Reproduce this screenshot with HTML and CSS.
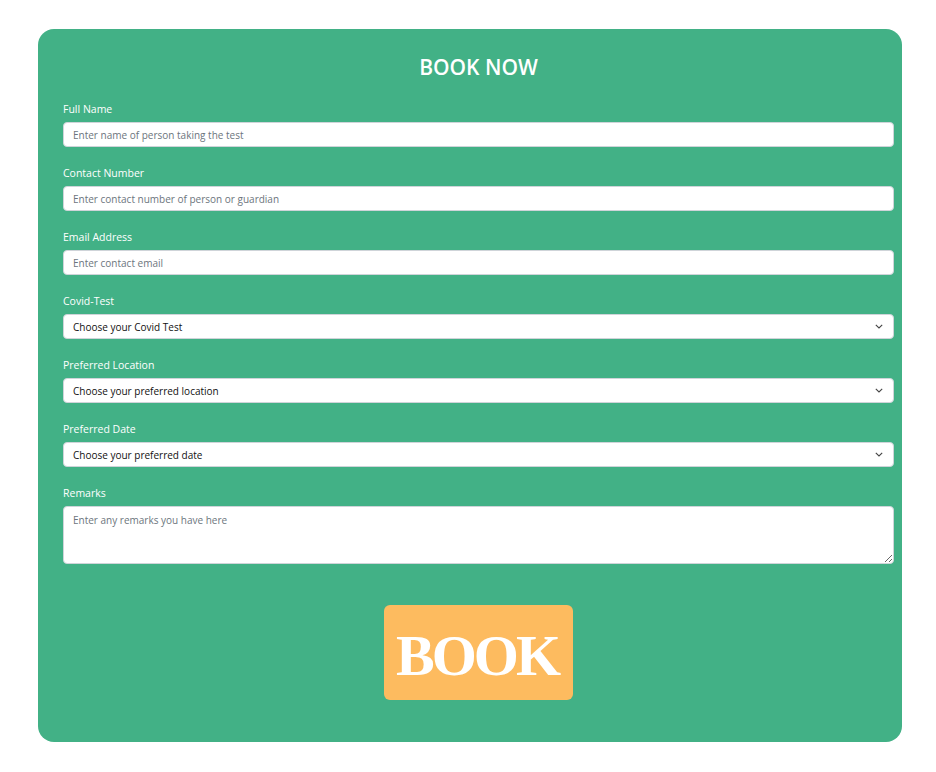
FILE: index.html
```html
<!DOCTYPE html>
<html lang="en">
<head>
<meta charset="utf-8">
<title>Book Now</title>
<link rel="stylesheet" href="styles.css">
</head>
<body>
<form class="card">
  <h1 class="title">BOOK NOW</h1>
  <div class="field">
    <label class="label" for="name">Full Name</label>
    <input class="input" id="name" type="text" placeholder="Enter name of person taking the test">
  </div>
  <div class="field">
    <label class="label" for="contact">Contact Number</label>
    <input class="input" id="contact" type="text" placeholder="Enter contact number of person or guardian">
  </div>
  <div class="field">
    <label class="label" for="email">Email Address</label>
    <input class="input" id="email" type="email" placeholder="Enter contact email">
  </div>
  <div class="field">
    <label class="label" for="test">Covid-Test</label>
    <div class="select-wrap">
      <select class="input select" id="test"><option>Choose your Covid Test</option></select>
      <svg class="chevron" width="8" height="5" viewBox="0 0 8 5"><path d="M0.8 0.8 L4 4 L7.2 0.8" fill="none" stroke="#444" stroke-width="1.1"/></svg>
    </div>
  </div>
  <div class="field">
    <label class="label" for="loc">Preferred Location</label>
    <div class="select-wrap">
      <select class="input select" id="loc"><option>Choose your preferred location</option></select>
      <svg class="chevron" width="8" height="5" viewBox="0 0 8 5"><path d="M0.8 0.8 L4 4 L7.2 0.8" fill="none" stroke="#444" stroke-width="1.1"/></svg>
    </div>
  </div>
  <div class="field">
    <label class="label" for="date">Preferred Date</label>
    <div class="select-wrap">
      <select class="input select" id="date"><option>Choose your preferred date</option></select>
      <svg class="chevron" width="8" height="5" viewBox="0 0 8 5"><path d="M0.8 0.8 L4 4 L7.2 0.8" fill="none" stroke="#444" stroke-width="1.1"/></svg>
    </div>
  </div>
  <div class="field field-last">
    <label class="label" for="remarks">Remarks</label>
    <textarea class="input textarea" id="remarks" placeholder="Enter any remarks you have here"></textarea>
  </div>
  <div class="actions">
    <button class="book" type="button">BOOK</button>
  </div>
</form>
</body>
</html>
```
FILE: styles.css
```css
* { box-sizing: border-box; }
html, body { margin: 0; background: #fff; }
body {
  padding: 29px 34px 30px 38px;
  font-family: "Open Sans", "Noto Sans", sans-serif;
}
.card {
  width: 864px;
  background: #42b186;
  border-radius: 16px;
  padding: 24px 8px 42px 25px;
}
.title {
  margin: 0 0 21px;
  text-align: center;
  color: #fff;
  font-size: 21px;
  font-weight: 600;
  line-height: 28px;
}
.field { margin-bottom: 19px; }
.field-last { margin-bottom: 0; }
.label {
  display: block;
  color: #fff;
  font-size: 10.5px;
  line-height: 14px;
  margin-bottom: 6px;
}
.input {
  display: block;
  width: 100%;
  height: 25px;
  margin: 0;
  border: 1px solid #cfd4d9;
  border-radius: 4px;
  background: #fff;
  padding: 0 9px;
  font-family: "Open Sans", "Noto Sans", sans-serif;
  font-size: 10px;
  color: #212529;
  outline: none;
}
.input::placeholder { color: #6c757d; opacity: 1; }
.select-wrap { position: relative; }
.select {
  appearance: none;
  -webkit-appearance: none;
  color: #111;
}
.chevron {
  position: absolute;
  right: 11px;
  top: 10px;
}
.textarea {
  height: 58px;
  padding: 6px 9px;
  resize: both;
}
.actions {
  display: flex;
  justify-content: center;
  padding-top: 41px;
}
.book {
  width: 189px;
  height: 95px;
  border: none;
  border-radius: 6px;
  background: #fdbb5f;
  color: #fff;
  font-family: "Liberation Serif", "DejaVu Serif", serif;
  font-weight: 700;
  font-size: 58px;
  letter-spacing: -3px;
  padding: 6px 3px 0 0;
  cursor: pointer;
}
```
